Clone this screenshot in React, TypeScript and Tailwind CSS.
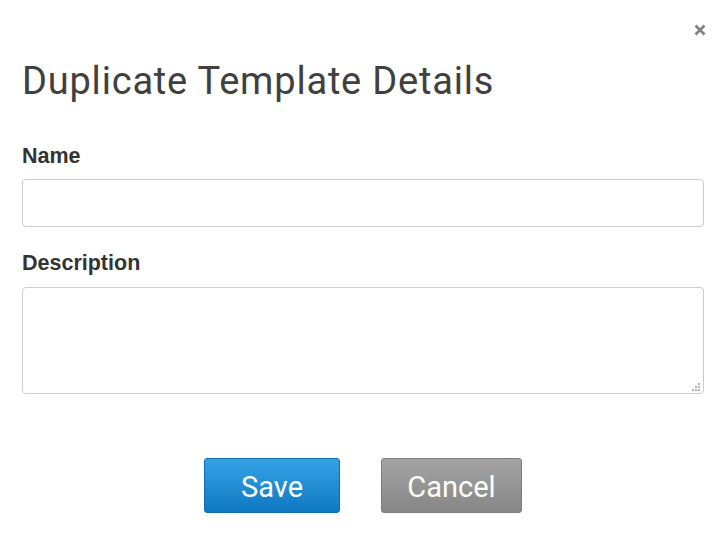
import React from 'react';

export default function App() {
  const [name, setName] = React.useState('');
  const [description, setDescription] = React.useState('');

  return (
    <div className="w-[721px] h-[550px] bg-white relative font-['Roboto',sans-serif]">
      <button className="absolute top-[24px] right-[15px] text-[#808080]" aria-label="Close">
        <svg width="12" height="12" viewBox="0 0 12 12">
          <path d="M1.5 1.5 L10.5 10.5 M10.5 1.5 L1.5 10.5" stroke="currentColor" strokeWidth="2.6" strokeLinecap="butt" />
        </svg>
      </button>
      <div className="pl-[22px] pt-[58px] pr-[17px]">
        <h1 className="text-[38px] leading-[46px] tracking-[0.8px] text-[#404040] font-normal">
          Duplicate Template Details
        </h1>

        <label className="block mt-[40px] text-[21.5px] leading-[24px] font-bold text-[#333] font-['Liberation_Sans',Arial,sans-serif]">
          Name
        </label>
        <input
          value={name}
          onChange={(e) => setName(e.target.value)}
          className="block mt-[11px] w-full h-[48px] border border-[#ccc] rounded-[4px] px-3 outline-none"
        />

        <label className="block mt-[24px] text-[21.5px] leading-[24px] font-bold text-[#333] font-['Liberation_Sans',Arial,sans-serif]">
          Description
        </label>
        <div className="relative mt-[12px]">
          <textarea
            value={description}
            onChange={(e) => setDescription(e.target.value)}
            className="block w-full h-[107px] border border-[#ccc] rounded-[4px] px-3 py-2 outline-none resize-none"
          />
          <svg className="absolute right-[3px] bottom-[2px]" width="9" height="9" viewBox="0 0 9 9">
            <rect x="6" y="0" width="2" height="2" fill="#b5b5b5" />
            <rect x="3" y="3" width="2" height="2" fill="#b5b5b5" />
            <rect x="6" y="3" width="2" height="2" fill="#b5b5b5" />
            <rect x="0" y="6" width="2" height="2" fill="#b5b5b5" />
            <rect x="3" y="6" width="2" height="2" fill="#b5b5b5" />
            <rect x="6" y="6" width="2" height="2" fill="#b5b5b5" />
          </svg>
        </div>

        <div className="flex justify-center gap-[41px] mt-[64px]">
          <button className="w-[136px] h-[55px] pt-[5px] rounded-[3px] text-white text-[29px] bg-gradient-to-b from-[#35a3e6] to-[#0b78c0] border border-[#0a6fb0]">
            Save
          </button>
          <button className="w-[141px] h-[55px] pt-[5px] rounded-[3px] text-white text-[29px] bg-gradient-to-b from-[#a4a4a4] to-[#868686] border border-[#7d7d7d]">
            Cancel
          </button>
        </div>
      </div>
    </div>
  );
}
